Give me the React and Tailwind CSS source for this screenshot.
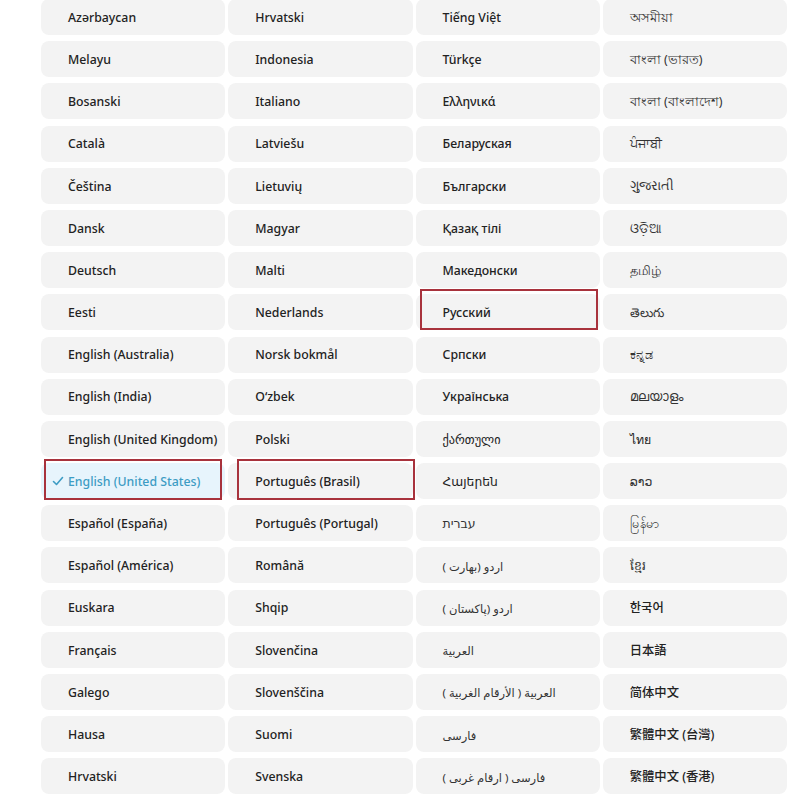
import React from "react";

const cols = [
  ["Azərbaycan","Melayu","Bosanski","Català","Čeština","Dansk","Deutsch","Eesti","English (Australia)","English (India)","English (United Kingdom)","English (United States)","Español (España)","Español (América)","Euskara","Français","Galego","Hausa","Hrvatski"],
  ["Hrvatski","Indonesia","Italiano","Latviešu","Lietuvių","Magyar","Malti","Nederlands","Norsk bokmål","O‘zbek","Polski","Português (Brasil)","Português (Portugal)","Română","Shqip","Slovenčina","Slovenščina","Suomi","Svenska"],
  ["Tiếng Việt","Türkçe","Ελληνικά","Беларуская","Български","Қазақ тілі","Македонски","Русский","Српски","Українська","ქართული","Հայերեն","עברית","اردو (بھارت )","اردو (پاکستان )","العربية","العربية ( الأرقام الغربية )","فارسی","فارسی ( ارقام غربی )"],
  ["অসমীয়া","বাংলা (ভারত)","বাংলা (বাংলাদেশ)","ਪੰਜਾਬੀ","ગુજરાતી","ଓଡ଼ିଆ","தமிழ்","తెలుగు","ಕನ್ನಡ","മലയാളം","ไทย","ລາວ","မြန်မာ","ខ្មែរ","한국어","日本語","简体中文","繁體中文 (台灣)","繁體中文 (香港)"],
];

const rows = [];
for (let r = 0; r < 19; r++) for (let c = 0; c < 4; c++) rows.push({ r, c, t: cols[c][r] });

const isLight = (t) => /[\u0590-\u08ff\u0980-\u0dff\u0e80-\u0eff\u1000-\u109f\u1780-\u17ff]/.test(t);
const isArabic = (t) => /[\u0600-\u06ff]/.test(t);

function Check() {
  return (
    <svg className="absolute left-[11px] top-1/2 -translate-y-1/2" width="12" height="12" viewBox="0 0 12 12" fill="none">
      <path d="M1.5 6.5 L4.5 9.5 L10.5 2.5" stroke="#3d9cc4" strokeWidth="1.6" strokeLinecap="round" strokeLinejoin="round" />
    </svg>
  );
}

export default function App() {
  return (
    <div className="relative w-[800px] h-[800px] overflow-hidden bg-white">
      <div className="mt-[-1px] ml-[41px] w-[746px] grid grid-cols-4 gap-x-[3px] gap-y-[6.2px] font-['Noto_Sans','DejaVu_Sans','Noto_Sans_CJK_SC',sans-serif]">
        {rows.map(({ r, c, t }) => {
          const sel = r === 11 && c === 0;
          const light = isLight(t);
          return (
            <div
              key={r + "-" + c}
              className={
                "relative h-[36px] rounded-[8px] flex items-center pl-[27px] pt-[2px] " +
                (sel ? "bg-[#e7f4fc] text-[#3d9cc4]" : "bg-[#f3f3f3] text-[#222222]")
              }
            >
              {sel && <Check />}
              <span
                dir="auto"
                className={
                  "whitespace-nowrap " +
                  (isArabic(t)
                    ? "text-[11.5px] font-normal text-[#333333]"
                    : light
                    ? "text-[12.5px] font-normal text-[#333333]"
                    : "text-[12.3px] font-medium")
                }
              >
                {t}
              </span>
            </div>
          );
        })}
      </div>
      <div className="absolute left-[44px] top-[459px] w-[178px] h-[41px] border-2 border-[#a8323c] pointer-events-none" />
      <div className="absolute left-[237px] top-[459px] w-[178px] h-[41px] border-2 border-[#a8323c] pointer-events-none" />
      <div className="absolute left-[420px] top-[289px] w-[178px] h-[41px] border-2 border-[#a8323c] pointer-events-none" />
    </div>
  );
}
